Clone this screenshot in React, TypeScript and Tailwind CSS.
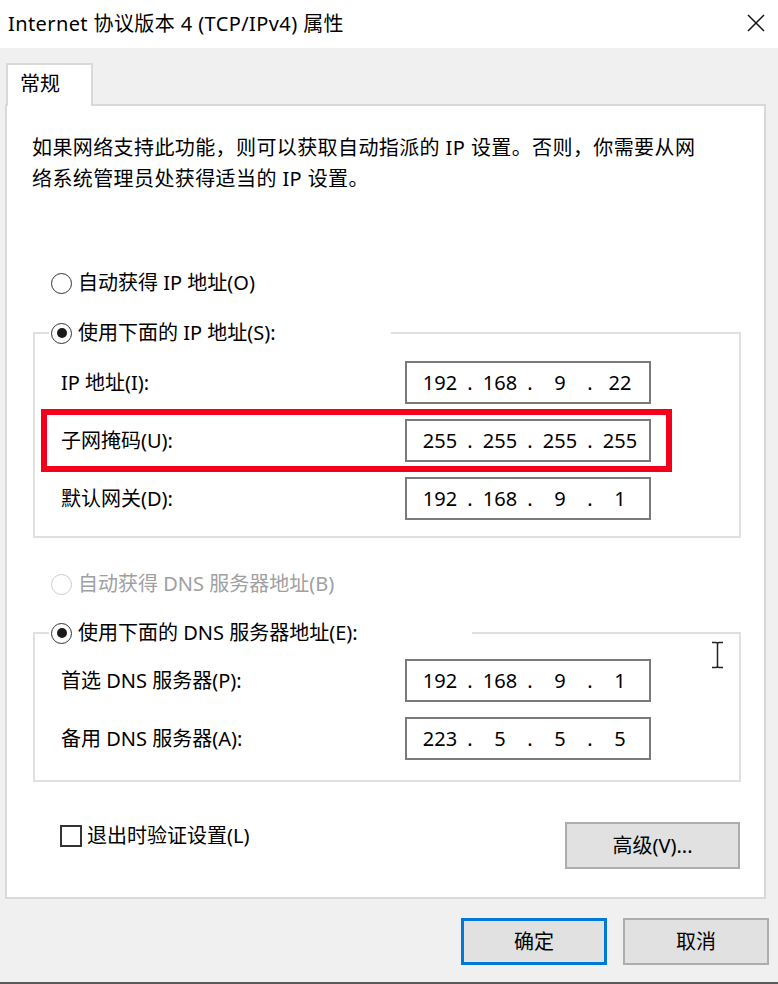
const font = "font-['Noto_Sans','Noto_Sans_CJK_SC',sans-serif]";

function Radio({ checked, disabled }: { checked?: boolean; disabled?: boolean }) {
  return (
    <span
      className={`flex h-[21px] w-[21px] shrink-0 items-center justify-center rounded-full border-[1.5px] bg-white ${
        disabled ? "border-[#cccccc]" : "border-[#333333]"
      }`}
    >
      {checked && <span className="h-[10px] w-[10px] rounded-full bg-[#1a1a1a]" />}
    </span>
  );
}

function RadioRow({ label, checked, disabled }: { label: string; checked?: boolean; disabled?: boolean }) {
  return (
    <div className="flex h-[24px] items-center gap-[6px]">
      <Radio checked={checked} disabled={disabled} />
      <span className={`leading-[24px] ${disabled ? "text-[#a0a0a0]" : "text-black"}`}>{label}</span>
    </div>
  );
}

function IpBox({ parts }: { parts: string[] }) {
  return (
    <div className="flex h-[43px] w-[246px] items-center border-2 border-[#7a7a7a] bg-white pl-[8px]">
      {parts.map((p, i) => (
        <div key={i} className="flex items-center">
          <span className="w-[50px] text-center leading-[24px]">{p}</span>
          {i < 3 && <span className="w-[10px] text-center leading-[24px]">.</span>}
        </div>
      ))}
    </div>
  );
}

function IpRow({ label, parts, marked }: { label: string; parts: string[]; marked?: boolean }) {
  return (
    <div className="relative flex items-center pl-[26px]">
      <span className="w-[344px] leading-[24px]">{label}</span>
      <IpBox parts={parts} />
      {marked && (
        <div className="absolute left-[6px] top-[-10px] h-[63px] w-[631px] border-[6px] border-[#f2001c]" />
      )}
    </div>
  );
}

export default function App() {
  return (
    <div className={`relative flex h-[984px] w-[778px] flex-col bg-[#f0f0f0] text-[20px] text-black ${font}`}>
      <div className="flex h-[48px] items-center justify-between bg-white pl-[8px] pr-[13px]">
        <span className="leading-[24px] tracking-[0.4px]">Internet 协议版本 4 (TCP/IPv4) 属性</span>
        <svg width="18" height="18" viewBox="0 0 18 18" className="mb-[3px]">
          <path d="M1 1 L17 17 M17 1 L1 17" stroke="#111" strokeWidth="1.5" fill="none" />
        </svg>
      </div>

      <div className="relative z-10 -mb-[2px] ml-[6px] mt-[15px] flex h-[43px] w-[87px] items-start border-2 border-b-0 border-[#d9d9d9] bg-white pl-[12px] pt-[7px]">
        <span className="leading-[24px]">常规</span>
      </div>

      <div className="ml-[5px] flex h-[795px] w-[761px] flex-col border-2 border-[#d9d9d9] bg-white pl-[26px] pr-[23px]">
        <p className="-ml-[1px] mt-[26px] leading-[31px] tracking-[0.4px]">
          如果网络支持此功能，则可以获取自动指派的 IP 设置。否则，你需要从网
          <br />
          络系统管理员处获得适当的 IP 设置。
        </p>

        <div className="ml-[18px] mt-[77px]">
          <RadioRow label="自动获得 IP 地址(O)" />
        </div>

        <fieldset className="mt-[26px] border-2 border-[#e0e0e0] pb-[16px]">
          <legend className="ml-[14px] w-[342px] pl-[2px]">
            <RadioRow label="使用下面的 IP 地址(S):" checked />
          </legend>
          <div className="mt-[16px] flex flex-col gap-[15px]">
            <IpRow label="IP 地址(I):" parts={["192", "168", "9", "22"]} />
            <IpRow label="子网掩码(U):" parts={["255", "255", "255", "255"]} marked />
            <IpRow label="默认网关(D):" parts={["192", "168", "9", "1"]} />
          </div>
        </fieldset>

        <div className="ml-[18px] mt-[34px]">
          <RadioRow label="自动获得 DNS 服务器地址(B)" disabled />
        </div>

        <fieldset className="mt-[25px] border-2 border-[#e0e0e0] pb-[20px]">
          <legend className="ml-[14px] w-[423px] pl-[2px]">
            <RadioRow label="使用下面的 DNS 服务器地址(E):" checked />
          </legend>
          <div className="mt-[14px] flex flex-col gap-[15px]">
            <IpRow label="首选 DNS 服务器(P):" parts={["192", "168", "9", "1"]} />
            <IpRow label="备用 DNS 服务器(A):" parts={["223", "5", "5", "5"]} />
          </div>
        </fieldset>

        <div className="mt-[40px] flex items-start justify-between pr-[1px]">
          <label className="ml-[27px] mt-[3px] flex h-[22px] items-center gap-[5px]">
            <span className="h-[22px] w-[22px] border-2 border-[#333333] bg-white" />
            <span className="leading-[24px]">退出时验证设置(L)</span>
          </label>
          <button className="flex h-[47px] w-[175px] items-center justify-center border-2 border-[#adadad] bg-[#e1e1e1]">
            高级(V)...
          </button>
        </div>
      </div>

      <div className="mt-[19px] flex justify-end gap-[16px] pr-[9px]">
        <button className="flex h-[47px] w-[146px] items-center justify-center border-[3px] border-[#0078d7] bg-[#e1e1e1]">
          确定
        </button>
        <button className="flex h-[47px] w-[146px] items-center justify-center border-2 border-[#adadad] bg-[#e1e1e1]">
          取消
        </button>
      </div>

      <div className="mt-auto h-[2px] bg-[#595959]" />

      <svg width="13" height="28" viewBox="0 0 13 28" className="absolute left-[711px] top-[641px]">
        <path d="M1 1.5 H5 Q6.5 1.5 6.5 3 V25 Q6.5 26.5 5 26.5 H1 M12 1.5 H8 Q6.5 1.5 6.5 3 M12 26.5 H8 Q6.5 26.5 6.5 25" stroke="#222" strokeWidth="1.5" fill="none" />
      </svg>
    </div>
  );
}
